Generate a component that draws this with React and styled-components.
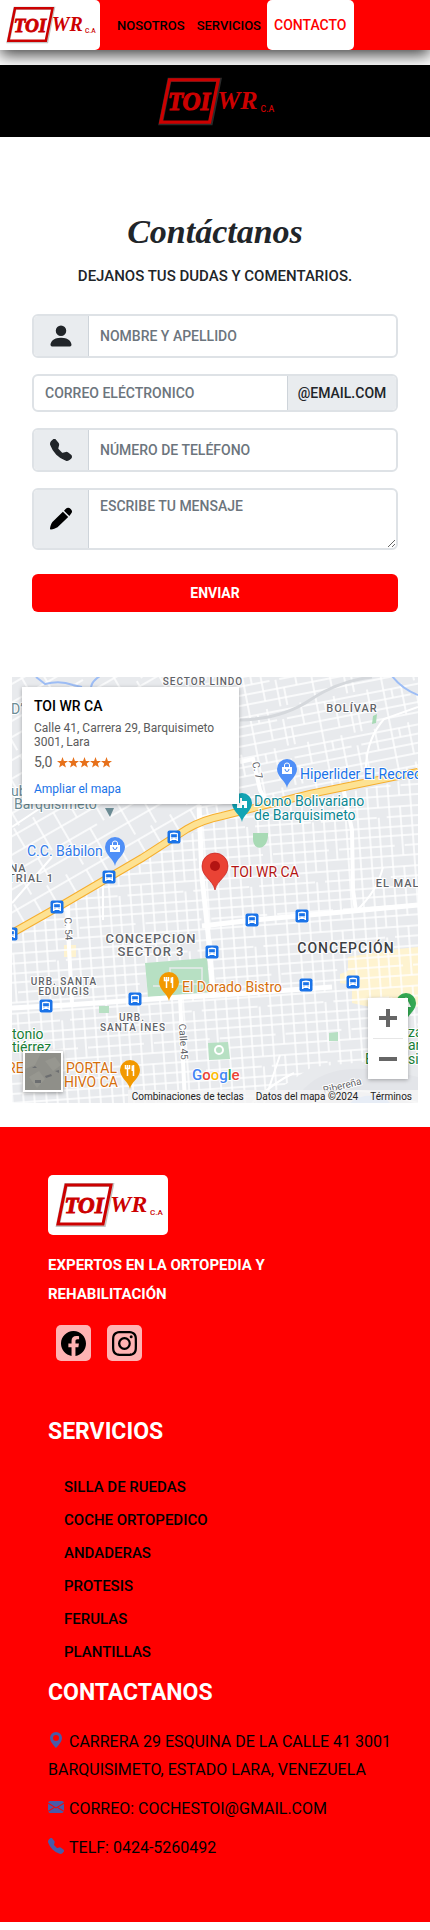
import React from "react";
import styled, { createGlobalStyle } from "styled-components";
import {
  BsPersonFill,
  BsTelephoneFill,
  BsFacebook,
  BsInstagram,
  BsGeoAltFill,
  BsEnvelopeFill,
} from "react-icons/bs";

const GlobalStyle = createGlobalStyle`
  *, *::before, *::after { box-sizing: border-box; }
  body {
    margin: 0;
    background: #fff;
    color: #212529;
    font-family: Roboto, "Liberation Sans", sans-serif;
    font-size: 14px;
    font-weight: 500;
  }
  h1, h2, p, ul { margin: 0; padding: 0; }
  a { color: inherit; text-decoration: none; }
  input, textarea, button { font: inherit; }
`;

/* ---------- Logo ---------- */

const LogoSvg = styled.svg`
  display: block;
  width: ${(p) => p.$width};
  height: auto;
`;

function Logo({ width, shadow = "#8a8a8a" }) {
  return (
    <LogoSvg $width={width} viewBox="0 0 120 60" role="img" aria-label="TOI WR C.A.">
      <path d="M18 10H64L56 50H10Z" fill="none" stroke={shadow} strokeWidth="4" opacity="0.5" />
      <path d="M18 10H63L55 49H10Z" fill="none" stroke="#c00" strokeWidth="3" />
      <text
        x="36"
        y="38"
        textAnchor="middle"
        fill="#c00"
        stroke="#c00"
        strokeWidth="1"
        fontFamily="'Liberation Serif', serif"
        fontStyle="italic"
        fontWeight="700"
        fontSize="23"
      >
        TOI
      </text>
      <text x="62" y="37" fill="#c00" fontFamily="'Liberation Serif', serif" fontStyle="italic" fontWeight="700" fontSize="24">
        WR
      </text>
      <text x="102" y="40" fill="#c00" fontSize="8">C.A</text>
    </LogoSvg>
  );
}

/* ---------- Header ---------- */

const Header = styled.header`
  position: relative;
  display: flex;
  height: 50px;
  background: #f00;
  box-shadow: 0 5px 15px rgba(0, 0, 0, 0.75);
`;

const Brand = styled.a`
  width: 100px;
  background: #fff;
  border-radius: 0 5px 5px 0;
`;

const Nav = styled.nav`
  display: flex;
  margin-left: 11px;
`;

const NavLink = styled.a`
  display: flex;
  align-items: center;
  padding: 0 ${(p) => (p.$active ? 7 : 6)}px;
  border-radius: 5px;
  font-size: ${(p) => (p.$active ? 14 : 13)}px;
  background: ${(p) => (p.$active ? "#fff" : "transparent")};
  color: ${(p) => (p.$active ? "#f00" : "#000")};
`;

const Band = styled.div`
  display: flex;
  justify-content: center;
  align-items: center;
  height: 72px;
  margin-top: 15px;
  background: #000;
`;

/* ---------- Form ---------- */

const Contact = styled.section`
  display: flex;
  flex-direction: column;
  align-items: center;
  padding: 70px 32px 0;
`;

const Title = styled.h1`
  font: italic 700 34px/50px "Liberation Serif", serif;
`;

const Subtitle = styled.p`
  margin-top: 5px;
  font-size: 15px;
  line-height: 28px;
`;

const Form = styled.form`
  display: flex;
  flex-direction: column;
  gap: 16px;
  width: 100%;
  margin-top: 24px;
`;

const Group = styled.div`
  display: flex;
  min-height: ${(p) => p.$height}px;
  border: 2px solid #dee2e6;
  border-radius: 6px;
  background: #fff;
  overflow: hidden;
`;

const Addon = styled.label`
  display: flex;
  align-items: center;
  justify-content: center;
  width: ${(p) => p.$width}px;
  background: #e9ecef;
  border: 0 solid #ced4da;
  border-width: ${(p) => (p.$end ? "0 0 0 1px" : "0 1px 0 0")};
`;

const Field = styled.input`
  flex: 1;
  min-width: 0;
  padding: 0 11px;
  border: 0;
  outline: 0;
  background: transparent;
  &::placeholder { color: #6c757d; opacity: 1; }
`;

const Message = styled(Field)`
  height: 58px;
  padding: 8px 11px;
  resize: vertical;
`;

const Submit = styled.button`
  height: 38px;
  margin-top: 8px;
  border: 0;
  border-radius: 6px;
  background: #f00;
  color: #fff;
  font-weight: 700;
`;

function PencilIcon() {
  return (
    <svg width="24" height="24" viewBox="0 0 24 24" aria-hidden="true">
      <path d="M16.6 2.1a3.6 3.6 0 0 1 5.2 5L20.300 8.900 15 3.700Z" />
      <path d="M13.900 4.800 19.200 10 8.500 20.200C6.500 21.500 4 22.200 2 22.500a.9.900 0 0 1-1-1C1.200 19.500 2 17 3.400 15Z" />
    </svg>
  );
}

/* ---------- Map ---------- */

const MapFrame = styled.section`
  position: relative;
  height: 426px;
  margin: 65px 12px 24px;
  overflow: hidden;
  background: #e8eaed;
  font-weight: 400;
`;

const MapCanvas = styled.svg`
  display: block;
  width: 100%;
  height: 100%;
`;

const InfoCard = styled.div`
  position: absolute;
  top: 10px;
  left: 10px;
  width: 217px;
  padding: 10px 12px 6px;
  background: #fff;
  box-shadow: 0 1px 4px rgba(0, 0, 0, 0.3);
  color: #5b5b5b;
  font-size: 12px;
  line-height: 14px;
`;

const PlaceName = styled.h2`
  margin-bottom: 6px;
  color: #000;
  font-size: 14px;
  font-weight: 500;
  line-height: 18px;
`;

const Rating = styled.div`
  display: flex;
  align-items: center;
  gap: 4px;
  margin: 4px 0 9px;
  font-size: 14px;
  line-height: 18px;
`;

const MapLink = styled.a`
  color: #1a73e8;
  line-height: 18px;
`;

const ZoomControl = styled.div`
  position: absolute;
  right: 10px;
  bottom: 24px;
  display: flex;
  flex-direction: column;
  width: 40px;
  padding: 0 5px;
  background: #fff;
  box-shadow: 0 1px 4px rgba(0, 0, 0, 0.3);
`;

const ZoomButton = styled.button`
  display: grid;
  place-items: center;
  height: 40px;
  padding: 0;
  border: 0;
  background: none;
  & + & { border-top: 1px solid #e6e6e6; height: 41px; }
`;

const Satellite = styled.button`
  position: absolute;
  left: 11px;
  bottom: 11px;
  width: 40px;
  height: 41px;
  padding: 0;
  border: 2px solid #fff;
  background: #8f8f89;
  box-shadow: 0 1px 4px rgba(0, 0, 0, 0.4);
`;

const Attribution = styled.div`
  position: absolute;
  right: 0;
  bottom: 0;
  display: flex;
  gap: 12px;
  padding: 0 6px 0 4px;
  background: rgba(245, 245, 245, 0.8);
  color: #222;
  font-size: 10px;
  line-height: 13px;
`;

function Pin({ x, y, color, children }) {
  return (
    <g transform={`translate(${x} ${y})`}>
      <path d="M0 19C-1 12-10 8-10 0A10 10 0 0 1 10 0C10 8 1 12 0 19Z" fill={color} />
      {children}
    </g>
  );
}

const Bag = () => (
  <g>
    <path d="M-5-2H5V5H-5Z" fill="#fff" />
    <path d="M-2.500-2V-4a2.500 2 0 0 1 5 0v2" fill="none" stroke="#fff" />
    <path d="M-2 0a2 2.500 0 0 0 4 0" fill="none" stroke="#4285f4" />
  </g>
);

const Cutlery = () => (
  <g stroke="#fff" fill="none" strokeWidth="1.500">
    <path d="M-4.500-5v3.500h4V-5M-2.500-5V6M3.500 6V-5" />
    <path d="M2.800-4.500V1" strokeWidth="2.500" />
  </g>
);

function BusStop({ x, y }) {
  return (
    <g transform={`translate(${x} ${y})`}>
      <rect x="-6.500" y="-6.500" width="13" height="13" rx="2" fill="#1a73e8" />
      <path d="M-4 4V-3Q-4-4.500 0-4.500T4-3V4H2.500V3H-2.500V4Z" fill="#fff" />
      <path d="M-2.700-2.500H2.700V0H-2.700ZM-2.700 1.200h1.200M1.500 1.200h1.200" fill="#1a73e8" stroke="#1a73e8" strokeWidth=".6" />
    </g>
  );
}

const stops = [
  [162, 160], [97, 200], [45, 230], [-1, 257], [200, 275], [123, 322],
  [34, 329], [240, 243], [290, 239], [294, 308], [341, 305],
];

const districts = [
  [191, 8, "SECTOR LINDO", 10], [340, 35, "BOLÍVAR", 11], [402, 210, "EL MALECÓN", 11],
  [6, 195, "NA", 11], [19, 205, "TRIAL 1", 11], [139, 266, "CONCEPCION", 13],
  [139, 279, "SECTOR 3", 13], [52, 308, "URB. SANTA", 10], [52, 318, "EDUVIGIS", 10],
  [120, 344, "URB.", 10], [121, 354, "SANTA INES", 10],
];

const places = [
  [288, 102, "Hiperlider El Recreo", "#1a73e8"],
  [242, 129, "Domo Bolivariano", "#0b8793"],
  [242, 143, "de Barquisimeto", "#0b8793"],
  [15, 179, "C.C. Bábilon", "#3079e8"],
  [219, 200, "TOI WR CA", "#b31412"],
  [170, 315, "El Dorado Bistro", "#d56e0c"],
  [54, 396, "PORTAL", "#d56e0c"],
  [52, 410, "HIVO CA", "#d56e0c"],
  [-5, 396, "RE", "#d56e0c"],
  [0, 362, "tonio", "#188038"],
  [0, 375, "tiérrez", "#188038"],
  [396, 360, "za", "#188038"],
  [396, 373, "ar", "#188038"],
  [353, 387, "B", "#188038"],
  [396, 387, "sim", "#188038"],
  [-1, 37, "D’", "#6b8b94"],
  [-1, 119, "ub", "#6b8b94"],
  [2, 132, "Barquisimeto", "#6b8b94"],
];

const star = "M5.500 0 6.900 3.900 11 4 7.800 6.500 8.900 10.500 5.500 8.200 2.100 10.500 3.200 6.500 0 4 4.100 3.900Z";

function CityMap() {
  return (
    <MapCanvas viewBox="0 0 406 426" preserveAspectRatio="xMidYMid slice" role="img" aria-label="Mapa de Barquisimeto">
      <defs>
        <pattern id="blocks" width="66" height="60" patternUnits="userSpaceOnUse" patternTransform="rotate(-4)">
          <path
            d="M0 5H66M0 15H40M50 15H66M0 25H66M0 36H66M0 46H24M34 46H66M0 56H66M5 0V60M16 0V60M26 0V36M26 46V60M37 0V60M48 0V25M48 36V60M59 0V60"
            fill="none" stroke="#fff" strokeWidth="1.500"
          />
        </pattern>
        <pattern id="northBlocks" width="68" height="40" patternUnits="userSpaceOnUse" patternTransform="rotate(-11)">
          <path
            d="M0 4H68M0 13H48M58 13H68M0 22H68M0 32H68M6 0V22M22 0V40M30 4V13M40 0V32M54 13V40M61 22V40"
            fill="none" stroke="#fff" strokeWidth="1.500"
          />
        </pattern>
        <pattern id="westBlocks" width="60" height="66" patternUnits="userSpaceOnUse" patternTransform="rotate(-30)">
          <path
            d="M0 6H60M0 22H60M14 38H60M0 52H60M8 0V38M28 6V66M46 0V22M52 38V66"
            fill="none" stroke="#fff" strokeWidth="1.500"
          />
        </pattern>
      </defs>

      <path d="M386 272 406 270V330H358L340 326V308L328 306V297L336 294V280Z" fill="#fef3d0" />
      <path d="M52 268h12v12H52z" fill="#fef3d0" />
      <path d="M0 0H406V95L298 117 210 139 188 146V0Z" fill="url(#northBlocks)" />
      <path d="M0 0H188V146L130 181 0 256Z" fill="url(#westBlocks)" />
      <path d="M0 262 55 229 130 185 200 145 406 100V380L300 390 245 426H0Z" fill="url(#blocks)" />

      <g fill="#b7e0c3">
        <path d="M133 286 195 281 198 315 136 320Z" />
        <path d="M87 329h10v7H87zM317 356l9-1v9h-9zM196 366l20-1 2 17-21 1z" />
        <path d="M241 156h15c1 18-15 19-15 6zM361 39l4-2-1 9-4 1z" fill="#a8dab5" />
        <path d="M385 334h6v22h-8z" />
      </g>
      <path d="M158 320V291H190V307H162M141 309h12" fill="none" stroke="#e8eaed" strokeWidth="1.500" />
      <circle cx="207" cy="373" r="4" fill="#b7e0c3" stroke="#fff" strokeWidth="2" />

      <path d="M228 43Q270 42 298 23T360 0" fill="none" stroke="#d5d8dc" strokeWidth="3" />
      <path d="M280 426C300 400 320 380 406 400V426Z" fill="#e3e5e9" />
      <path d="M240 426Q262 405 282 396M252 426 268 378M300 426Q330 415 345 414T406 426" fill="none" stroke="#fff" strokeWidth="2" />
      <path d="M338 426Q350 415 372 420L378 426Z" fill="#aecbfa" />
      <path d="M380-1Q390 12 406 18M24 0 33 7Q48 3 61 8L70 10M88-1Q80 4 79 10" fill="none" stroke="#9dbdf5" strokeWidth="2" />

      <g fill="none" stroke="#fff">
        <path d="M0 331 55 328 155 321 208 318 320 310" strokeWidth="5" />
        <path d="M190 249 241 243 341 234 406 228" strokeWidth="5" />
        <path d="M187 128 190 200 196 256 201 316" strokeWidth="5" />
        <path d="M331 110 340 153 341 213 344 234" strokeWidth="4" />
        <path d="M56 226 57 270 60 326M168 320 170 363 173 426M228 85 241 82 248 113 256 128" strokeWidth="4" />
        <path d="M91 203V243M344 234Q365 215 371 190M0 150 33 128M354 100Q352 65 372 42L406 30M0 226 40 180" strokeWidth="2" />
      </g>

      <path d="M-5 259 55 225 130 181 175 152Q190 143 210 139L298 117 406 95" fill="none" stroke="#f6ae2d" strokeWidth="8" />
      <path d="M-5 259 55 225 130 181 175 152Q190 143 210 139L298 117 406 95" fill="none" stroke="#fde293" strokeWidth="6" />

      {stops.map(([x, y]) => <BusStop key={`${x}-${y}`} x={x} y={y} />)}

      <path d="M93 131h9l-4 9z" fill="#6b8b94" />
      <Pin x={103} y={170} color="#4f8ff7"><Bag /></Pin>
      <Pin x={275} y={92} color="#4f8ff7"><Bag /></Pin>
      <Pin x={230} y={126} color="#12a4b4">
        <path d="M-5 5V0H-2V-5H0V-2H5V5H2V2H0V5Z" fill="#fff" />
      </Pin>
      <Pin x={157} y={305} color="#f29900"><Cutlery /></Pin>
      <Pin x={118} y={393} color="#f29900"><Cutlery /></Pin>
      <Pin x={394} y={326} color="#34a853"><path d="M0-6 5 4H-5Z" fill="#fff" /></Pin>
      <path d="M203 213C201 203 190 200 190 189A13 13 0 0 1 216 189C216 200 205 203 203 213Z" fill="#ea4335" stroke="#c5221f" strokeWidth=".7" />
      <circle cx="203" cy="189" r="5" fill="#b31412" />

      <g stroke="#fff" strokeWidth="2" strokeLinejoin="round" paintOrder="stroke">
        <g fill="#5f6368" textAnchor="middle" fontWeight="500" letterSpacing="1">
          {districts.map(([x, y, label, size]) => (
            <text key={label} x={x} y={y} fontSize={size}>{label}</text>
          ))}
          <text x="334" y="276" fontSize="14" fill="#3c4043">CONCEPCIÓN</text>
        </g>
        <g fontSize="14">
          {places.map(([x, y, label, color]) => (
            <text key={label} x={x} y={y} fill={color}>{label}</text>
          ))}
        </g>
        <g fill="#5f6368" fontSize="10" textAnchor="middle">
          <text transform="translate(242 94) rotate(76)">C. 7</text>
          <text transform="translate(53 252) rotate(88)">C. 54</text>
          <text transform="translate(168 365) rotate(86)">Calle 45</text>
          <text transform="translate(331 412) rotate(-14)">Ribereña</text>
        </g>
        <text x="180" y="403" fontSize="15" fontWeight="500">
          <tspan fill="#4285f4">G</tspan><tspan fill="#ea4335">o</tspan><tspan fill="#fbbc04">o</tspan><tspan fill="#4285f4">g</tspan><tspan fill="#34a853">l</tspan><tspan fill="#ea4335">e</tspan>
        </text>
      </g>
    </MapCanvas>
  );
}

/* ---------- Footer ---------- */

const Footer = styled.footer`
  margin-bottom: 9px;
  padding: 48px 24px 52px 48px;
  background: #f00;
  color: #000;
  font-size: 15px;
`;

const FooterBrand = styled.a`
  display: block;
  width: 120px;
  background: #fff;
  border-radius: 5px;
`;

const Tagline = styled.p`
  margin-top: 16px;
  color: #fff;
  font-weight: 700;
  line-height: 29px;
`;

const Social = styled.div`
  display: flex;
  gap: 16px;
  margin: 16px 8px 52px;
`;

const SocialLink = styled.a`
  display: grid;
  place-items: center;
  width: 35px;
  height: 36px;
  border-radius: 5px;
  background: #ffb3b3;
`;

const FooterTitle = styled.h2`
  color: #fff;
  font-size: 23px;
  font-weight: 700;
  line-height: 38px;
`;

const ServiceList = styled.ul`
  margin: 20px 0 5px 16px;
  list-style: none;
  line-height: 33px;
`;

const ContactDetails = styled.address`
  display: flex;
  flex-direction: column;
  gap: 11px;
  padding: 16px 0 8px;
  font-size: 16px;
  font-style: normal;
  font-weight: 400;
  line-height: 28px;
  svg {
    margin-right: 5px;
    color: #4a5aa8;
    vertical-align: -1px;
  }
`;

const services = ["SILLA DE RUEDAS", "COCHE ORTOPEDICO", "ANDADERAS", "PROTESIS", "FERULAS", "PLANTILLAS"];

export default function App() {
  return (
    <>
      <GlobalStyle />
      <Header>
        <Brand href="#"><Logo width="100px" /></Brand>
        <Nav>
          <NavLink href="#nosotros">NOSOTROS</NavLink>
          <NavLink href="#servicios">SERVICIOS</NavLink>
          <NavLink href="#contacto" $active>CONTACTO</NavLink>
        </Nav>
      </Header>
      <Band><Logo width="130px" shadow="#555" /></Band>

      <main>
        <Contact id="contacto">
          <Title>Contáctanos</Title>
          <Subtitle>DEJANOS TUS DUDAS Y COMENTARIOS.</Subtitle>
          <Form>
            <Group $height={44}>
              <Addon $width={55} htmlFor="nombre" aria-label="Nombre"><BsPersonFill size={28} /></Addon>
              <Field id="nombre" placeholder="NOMBRE Y APELLIDO" />
            </Group>
            <Group $height={38}>
              <Field id="correo" placeholder="CORREO ELÉCTRONICO" />
              <Addon $width={109} $end htmlFor="correo">@EMAIL.COM</Addon>
            </Group>
            <Group $height={44}>
              <Addon $width={55} htmlFor="telefono" aria-label="Teléfono"><BsTelephoneFill size={22} /></Addon>
              <Field id="telefono" type="tel" placeholder="NÚMERO DE TELÉFONO" />
            </Group>
            <Group $height={62}>
              <Addon $width={55} htmlFor="mensaje" aria-label="Mensaje"><PencilIcon /></Addon>
              <Message as="textarea" id="mensaje" placeholder="ESCRIBE TU MENSAJE" />
            </Group>
            <Submit type="submit">ENVIAR</Submit>
          </Form>
        </Contact>

        <MapFrame>
          <CityMap />
          <InfoCard>
            <PlaceName>TOI WR CA</PlaceName>
            <p>Calle 41, Carrera 29, Barquisimeto 3001, Lara</p>
            <Rating>
              5,0
              <svg width="55" height="11" viewBox="0 0 55 11" fill="#e7711b" aria-label="5 estrellas">
                {[0, 11, 22, 33, 44].map((x) => <path key={x} d={star} transform={`translate(${x})`} />)}
              </svg>
            </Rating>
            <MapLink href="#mapa">Ampliar el mapa</MapLink>
          </InfoCard>
          <Satellite aria-label="Mostrar imágenes satelitales">
            <svg width="36" height="37" viewBox="0 0 36 37" aria-hidden="true">
              <path d="M0 0h16l-6 12L0 16zM20 8l10-4 6 8-8 6zM4 24l10-6 6 8-8 9z" fill="#979790" />
              <path d="M10 27h6v3h-6zM20 23l6-2 1 2-6 2zM30 18l4-1v3zM7 15l3-2 2 2z" fill="#6c6e70" />
            </svg>
          </Satellite>
          <ZoomControl>
            <ZoomButton aria-label="Acercar">
              <svg width="18" height="18" viewBox="0 0 18 18"><path d="M7 0h4v7h7v4h-7v7H7v-7H0V7h7z" fill="#666" /></svg>
            </ZoomButton>
            <ZoomButton aria-label="Alejar">
              <svg width="18" height="18" viewBox="0 0 18 18"><path d="M0 7h18v4H0z" fill="#666" /></svg>
            </ZoomButton>
          </ZoomControl>
          <Attribution>
            <span>Combinaciones de teclas</span>
            <span>Datos del mapa ©2024</span>
            <a href="#terminos">Términos</a>
          </Attribution>
        </MapFrame>
      </main>

      <Footer>
        <FooterBrand href="#"><Logo width="120px" /></FooterBrand>
        <Tagline>EXPERTOS EN LA ORTOPEDIA Y<br />REHABILITACIÓN</Tagline>
        <Social>
          <SocialLink href="#facebook" aria-label="Facebook"><BsFacebook size={25} /></SocialLink>
          <SocialLink href="#instagram" aria-label="Instagram"><BsInstagram size={25} /></SocialLink>
        </Social>
        <FooterTitle id="servicios">SERVICIOS</FooterTitle>
        <ServiceList>
          {services.map((name) => <li key={name}><a href="#servicios">{name}</a></li>)}
        </ServiceList>
        <FooterTitle>CONTACTANOS</FooterTitle>
        <ContactDetails>
          <p>
            <BsGeoAltFill size={16} />CARRERA 29 ESQUINA DE LA CALLE 41 3001<br />BARQUISIMETO, ESTADO LARA, VENEZUELA
          </p>
          <p><BsEnvelopeFill size={16} />CORREO: COCHESTOI@GMAIL.COM</p>
          <p><BsTelephoneFill size={16} />TELF: 0424-5260492</p>
        </ContactDetails>
      </Footer>
    </>
  );
}
